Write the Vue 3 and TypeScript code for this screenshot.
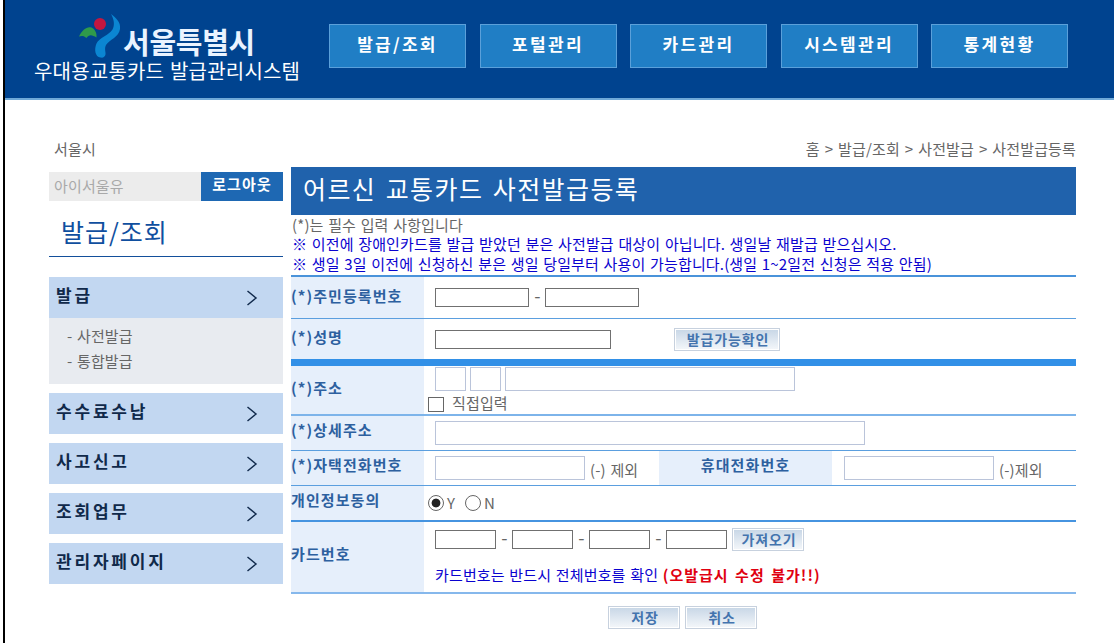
<script setup lang="ts">
import { ref } from 'vue'

interface MenuItem {
  title: string
  children: string[]
}

const navItems: string[] = ['발급/조회', '포털관리', '카드관리', '시스템관리', '통계현황']

const menu: MenuItem[] = [
  { title: '발급', children: ['사전발급', '통합발급'] },
  { title: '수수료수납', children: [] },
  { title: '사고신고', children: [] },
  { title: '조회업무', children: [] },
  { title: '관리자페이지', children: [] },
]

const residentNo = ref<string[]>(['', ''])
const name = ref('')
const address = ref<string[]>(['', '', ''])
const directInput = ref(false)
const detailAddress = ref('')
const homePhone = ref('')
const mobilePhone = ref('')
const consent = ref<'Y' | 'N'>('Y')
const cardNo = ref<string[]>(['', '', '', ''])
</script>

<template>
  <div class="page">
    <header class="header">
      <div class="brand">
        <div class="brand-top">
          <svg class="brand-mark" width="44" height="46" viewBox="0 0 44 46">
            <path d="M1 22.5 C4 16 9 12 13.500 13.500 C17 15 19 19 18.500 23.500 C14 20.500 11 20 8.500 24 C6 21.500 3.500 21.500 1 22.500 Z" fill="#2f9a4b" />
            <circle cx="22" cy="10" r="6" fill="#c3173f" />
            <path d="M33 0 C38 4 43 8 42 15 C41 23 31 26 28 31 C26 35 28 38 27.500 40.500 C27 43 25 44 22.500 43.500 C17 43 16 35 18.500 29.500 C21 24 31 21 34.500 15.500 C37 11 36 5 33 0 Z" fill="#0b86d2" />
          </svg>
          <span class="brand-city">서울특별시</span>
        </div>
        <div class="brand-system">우대용교통카드 발급관리시스템</div>
      </div>
      <nav class="nav">
        <a v-for="item in navItems" :key="item" class="nav-item">{{ item }}</a>
      </nav>
    </header>

    <div class="body">
      <aside class="sidebar">
        <div class="org">서울시</div>
        <div class="login">
          <span class="user">아이서울유</span>
          <button class="logout" type="button">로그아웃</button>
        </div>
        <h2 class="section">발급/조회</h2>
        <ul class="menu">
          <li v-for="item in menu" :key="item.title" class="menu-item">
            <div class="menu-title">
              <span>{{ item.title }}</span>
              <svg width="12" height="16" viewBox="0 0 12 16">
                <path d="M1.500 1 L10 8 L1.500 15" fill="none" stroke="#122b4d" stroke-width="1.500" />
              </svg>
            </div>
            <ul v-if="item.children.length" class="submenu">
              <li v-for="child in item.children" :key="child">- {{ child }}</li>
            </ul>
          </li>
        </ul>
      </aside>

      <main class="content">
        <div class="crumbs">홈 &gt; 발급/조회 &gt; 사전발급 &gt; 사전발급등록</div>
        <h1 class="title">어르신 교통카드 사전발급등록</h1>
        <div class="notes">
          <p>(*)는 필수 입력 사항입니다</p>
          <p class="blue">※ 이전에 장애인카드를 발급 받았던 분은 사전발급 대상이 아닙니다. 생일날 재발급 받으십시오.</p>
          <p class="blue">※ 생일 3일 이전에 신청하신 분은 생일 당일부터 사용이 가능합니다.(생일 1~2일전 신청은 적용 안됨)</p>
        </div>

        <form class="form" @submit.prevent>
          <div class="row row-resident">
            <label class="label">(*)주민등록번호</label>
            <div class="field">
              <input v-model="residentNo[0]" class="dark w94" />
              <span class="dash">-</span>
              <input v-model="residentNo[1]" class="dark w94" />
            </div>
          </div>
          <div class="row row-name">
            <label class="label">(*)성명</label>
            <div class="field">
              <input v-model="name" class="dark w176" />
              <button class="btn check" type="button">발급가능확인</button>
            </div>
          </div>
          <div class="row row-address">
            <label class="label">(*)주소</label>
            <div class="field stack">
              <div class="line">
                <input v-model="address[0]" class="w31" />
                <input v-model="address[1]" class="w31" />
                <input v-model="address[2]" class="w290" />
              </div>
              <label class="direct">
                <input v-model="directInput" type="checkbox" class="box" />
                <span>직접입력</span>
              </label>
            </div>
          </div>
          <div class="row row-detail">
            <label class="label">(*)상세주소</label>
            <div class="field">
              <input v-model="detailAddress" class="w430" />
            </div>
          </div>
          <div class="row row-phone">
            <label class="label">(*)자택전화번호</label>
            <div class="field">
              <input v-model="homePhone" class="w150" />
              <span class="suffix">(-) 제외</span>
            </div>
            <label class="label center">휴대전화번호</label>
            <div class="field mobile">
              <input v-model="mobilePhone" class="w150" />
              <span class="suffix">(-)제외</span>
            </div>
          </div>
          <div class="row row-consent">
            <label class="label">개인정보동의</label>
            <div class="field radios">
              <input v-model="consent" type="radio" value="Y" class="radio" /><span class="yes">Y</span>
              <input v-model="consent" type="radio" value="N" class="radio" /><span class="no">N</span>
            </div>
          </div>
          <div class="row row-card">
            <label class="label">카드번호</label>
            <div class="field stack">
              <div class="line card-line">
                <template v-for="(_, i) in cardNo" :key="i">
                  <span v-if="i > 0" class="dash">-</span>
                  <input v-model="cardNo[i]" class="dark w61" />
                </template>
                <button class="btn fetch" type="button">가져오기</button>
              </div>
              <p class="warn"><span class="blue">카드번호는 반드시 전체번호를 확인</span> <b>(오발급시 수정 불가!!)</b></p>
            </div>
          </div>
        </form>

        <div class="actions">
          <button class="btn" type="button">저장</button>
          <button class="btn" type="button">취소</button>
        </div>
      </main>
    </div>
  </div>
</template>

<style>
body {
  margin: 0;
  background: #fff;
  overflow: hidden;
}
</style>

<style scoped>
.page {
  box-sizing: border-box;
  width: 1114px;
  height: 643px;
  padding-left: 3px;
  background: linear-gradient(90deg, #fff 3px, #000 3px, #000 5px, #fff 5px);
  font: 15px/20px "Noto Sans CJK KR", "Liberation Sans", sans-serif;
  letter-spacing: 0.150px;
  word-spacing: 1.100px;
  color: #666;
  overflow: hidden;
}
.page *,
.page *::before {
  box-sizing: border-box;
}
ul,
p,
h1,
h2 {
  margin: 0;
  padding: 0;
  list-style: none;
  font-weight: 400;
}
.header {
  display: flex;
  height: 100px;
  margin-left: 2px;
  background: #00438f;
  border-bottom: 2px solid #6fa9d8;
  color: #fff;
}
.brand {
  width: 324px;
  padding: 14px 0 0 29px;
}
.brand-top {
  display: flex;
  height: 45px;
  padding-left: 44px;
}
.brand-mark {
  flex: none;
}
.brand-city {
  margin: 12px 0 0 1px;
  font-size: 29px;
  font-weight: 700;
  line-height: 30px;
  letter-spacing: -0.300px;
  color: #eaf3ff;
}
.brand-system {
  font-size: 20px;
  line-height: 23px;
  letter-spacing: 0.200px;
  white-space: nowrap;
}
.nav {
  display: grid;
  grid-template-columns: repeat(5, 137px);
  column-gap: 13.500px;
  padding-top: 24px;
}
.nav-item {
  height: 44px;
  border: 1px solid #5ba0da;
  background: #207ec5;
  font-size: 17px;
  font-weight: 700;
  line-height: 38px;
  letter-spacing: 2.300px;
  text-align: center;
}
.body {
  display: flex;
  gap: 8px;
  padding: 39px 0 0 46px;
}
.sidebar {
  width: 234px;
}
.org {
  height: 33px;
  padding-left: 5px;
}
.login {
  display: flex;
  height: 29px;
  background: #ececec;
}
.user {
  width: 152px;
  padding-left: 5px;
  line-height: 28px;
  color: #a9a9a9;
}
.logout {
  flex: 1;
  border: 0;
  padding: 0 0 5px 0;
  background: #1e68b3;
  color: #fff;
  font: inherit;
  font-weight: 700;
  letter-spacing: 1.100px;
}
.section {
  height: 56px;
  padding: 11px 0 0 12px;
  border-bottom: 1px solid #134f9b;
  font-size: 25px;
  line-height: 38px;
  letter-spacing: 1px;
  color: #104f9f;
}
.menu {
  display: flex;
  flex-direction: column;
  gap: 9px;
  margin-top: 20px;
}
.menu-title {
  display: flex;
  justify-content: space-between;
  height: 41px;
  padding: 0 25px 0 7px;
  background: #c2d7f1;
  font-size: 17px;
  font-weight: 700;
  line-height: 36px;
  letter-spacing: 2.800px;
  color: #10294a;
}
.menu-title svg {
  margin-top: 13px;
}
.submenu {
  height: 66px;
  padding: 5px 0 0 18px;
  background: #e8ebf0;
  line-height: 25px;
}
.content {
  width: 785px;
}
.crumbs {
  height: 28px;
  text-align: right;
  word-spacing: 1.400px;
}
.title {
  height: 48px;
  padding-left: 12px;
  background: #2062ac;
  color: #fff;
  font-size: 25px;
  line-height: 43px;
  letter-spacing: 1.400px;
  word-spacing: 2.500px;
}
.notes {
  height: 60px;
  padding-left: 1px;
  line-height: 19.300px;
  white-space: nowrap;
}
.blue {
  color: #0a02cf;
}
.form {
  border-top: 2px solid #4a93da;
}
.row {
  display: grid;
  grid-template-columns: 133px 1fr;
  border-bottom: 1px solid #5b9fdf;
}
.row-resident { height: 42px; }
.row-name { height: 47px; border-bottom: 7px solid #3290e7; }
.row-address { height: 50px; border-bottom: 2px solid #7db4ea; }
.row-detail { height: 35px; }
.row-phone { height: 35px; grid-template-columns: 133px 235px 173px 1fr; }
.row-consent { height: 36px; border-bottom: 2px solid #4694e0; }
.row-card { height: 72px; border-bottom: 2px solid #86b8ec; }
.label {
  display: flex;
  align-items: center;
  padding-bottom: 4px;
  background: #e6effb;
  color: #2d609f;
  font-weight: 700;
  letter-spacing: 1.080px;
  white-space: nowrap;
}
.row-address .label { padding-bottom: 5px; }
.row-detail .label,
.row-phone .label,
.row-consent .label { padding-bottom: 7px; }
.row-card .label { padding-bottom: 6px; }
.center { justify-content: center; }
.field {
  display: flex;
  align-items: center;
  padding-left: 11px;
}
.mobile { padding-left: 12px; }
.stack {
  flex-direction: column;
  align-items: flex-start;
}
.line {
  display: flex;
  align-items: center;
  gap: 4px;
}
input {
  flex: none;
  height: 24px;
  margin: 0;
  padding: 0 3px;
  border: 1px solid #bac4da;
  border-radius: 0;
  background: #fff;
  outline: 0;
  font: inherit;
}
.dark { height: 19px; border-color: #707070; }
.w31 { width: 31px; }
.w61 { width: 61px; }
.w94 { width: 94px; }
.w150 { width: 150px; }
.w176 { width: 176px; }
.w290 { width: 290px; }
.w430 { width: 430px; }
.dash {
  width: 16px;
  padding: 0 0 5px 1px;
  font-size: 18px;
  text-align: center;
}
.btn {
  width: 72px;
  height: 23px;
  padding: 0 0 1px 2px;
  border: 1px solid #c7d1de;
  background: linear-gradient(#c7d6e6, #f4f7fa);
  box-shadow: inset 0 0 0 1px #fff;
  color: #4474ae;
  font: 700 14px/18px "Noto Sans CJK KR", sans-serif;
  letter-spacing: 0.900px;
  white-space: nowrap;
}
.check {
  width: 106px;
  margin-left: 63px;
}
.fetch { margin-left: 5px; }
.row-address .line { margin-top: 1px; }
.direct {
  display: flex;
  align-items: center;
  height: 20px;
  margin: 3px 0 0 -7px;
}
.direct span { margin: -2px 0 0 8px; }
.box,
.radio {
  appearance: none;
  width: 16px;
  height: 16px;
  padding: 0;
  border-color: #666;
}
.box { height: 15px; }
.radio { border-radius: 50%; }
.radio:checked { background: radial-gradient(circle, #222 4px, #fff 4.800px); }
.radios { padding-left: 4px; }
.yes,
.no {
  margin-left: 3px;
}
.yes { width: 18px; }
.suffix {
  margin: 3px 0 0 5px;
}
.card-line {
  gap: 0;
  height: 23px;
  margin-top: 6px;
}
.warn {
  margin-top: 14px;
  white-space: nowrap;
}
.warn b {
  color: #e00010;
  letter-spacing: 1.020px;
  word-spacing: 2px;
}
.actions {
  display: flex;
  justify-content: center;
  gap: 5px;
  margin: 12px 2px 0 0;
}
</style>
